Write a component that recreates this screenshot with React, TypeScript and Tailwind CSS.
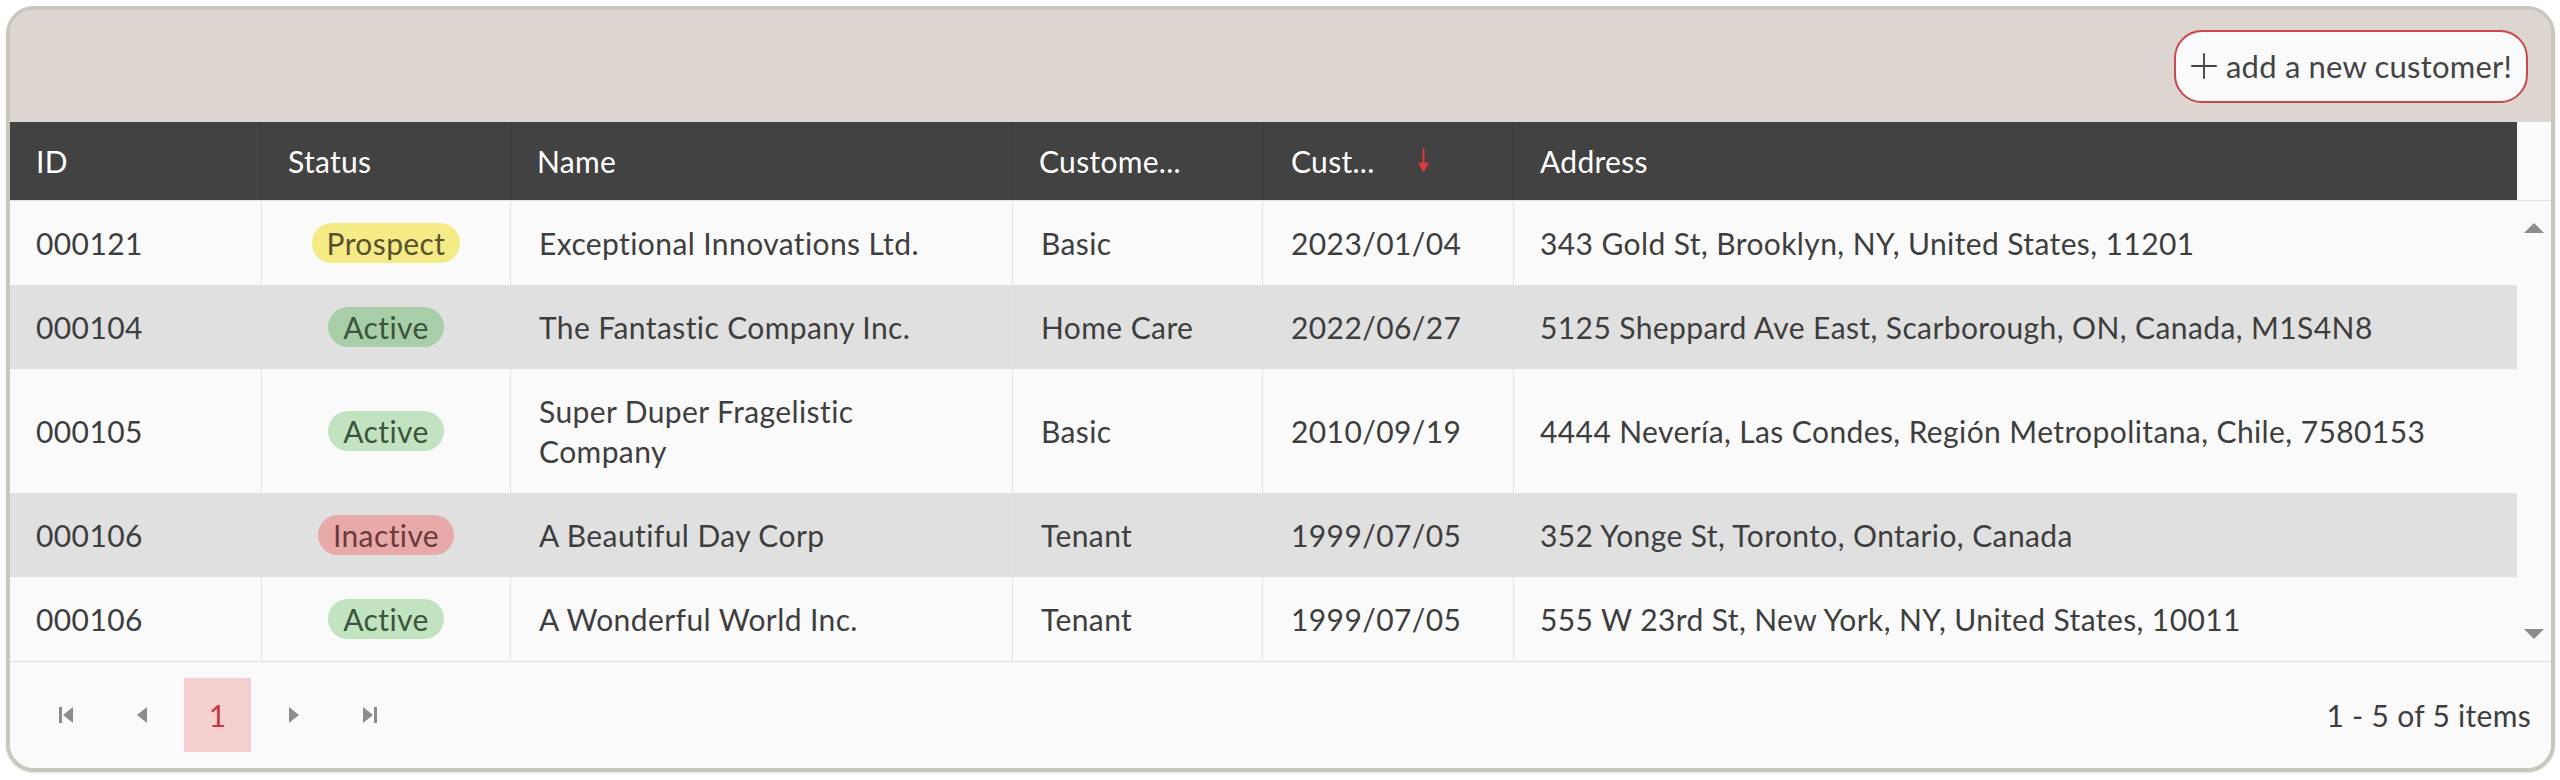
import React from "react";

type Status = "Prospect" | "Active" | "Inactive";

type Row = {
  id: string;
  status: Status;
  name: string;
  type: string;
  since: string;
  address: string;
};

const rows: Row[] = [
  { id: "000121", status: "Prospect", name: "Exceptional Innovations Ltd.", type: "Basic", since: "2023/01/04", address: "343 Gold St, Brooklyn, NY, United States, 11201" },
  { id: "000104", status: "Active", name: "The Fantastic Company Inc.", type: "Home Care", since: "2022/06/27", address: "5125 Sheppard Ave East, Scarborough, ON, Canada, M1S4N8" },
  { id: "000105", status: "Active", name: "Super Duper Fragelistic Company", type: "Basic", since: "2010/09/19", address: "4444 Nevería, Las Condes, Región Metropolitana, Chile, 7580153" },
  { id: "000106", status: "Inactive", name: "A Beautiful Day Corp", type: "Tenant", since: "1999/07/05", address: "352 Yonge St, Toronto, Ontario, Canada" },
  { id: "000106", status: "Active", name: "A Wonderful World Inc.", type: "Tenant", since: "1999/07/05", address: "555 W 23rd St, New York, NY, United States, 10011" },
];

const cols = "grid grid-cols-[252px_249px_502px_250px_251px_1fr]";

const pill = (status: Status, alt: boolean) => {
  if (status === "Prospect") return "bg-[#f4eb87] text-[#57522f]";
  if (status === "Inactive") return "bg-[#e8aaa9] text-[#6b3b3b]";
  return alt ? "bg-[#a8cea8] text-[#3b553c]" : "bg-[#c1e3c0] text-[#3b553c]";
};

const Tri = ({ dir }: { dir: "up" | "down" | "left" | "right" }) => {
  const pts = {
    up: "0,10 10,0 20,10",
    down: "0,0 10,10 20,0",
    left: "10,0 10,16 0,8",
    right: "0,0 0,16 10,8",
  }[dir];
  const box = dir === "up" || dir === "down" ? "0 0 20 10" : "0 0 10 16";
  const size = dir === "up" || dir === "down" ? "w-[20px] h-[10px]" : "w-[10px] h-[16px]";
  return (
    <svg viewBox={box} className={size}>
      <polygon points={pts} fill="#8c8c8c" />
    </svg>
  );
};

export default function App() {
  return (
    <div className="w-[2560px] h-[780px] bg-white p-[6px] pr-[5px] text-[#3e3e3e]" style={{ fontFamily: "Lato, 'Noto Sans', sans-serif" }}>
      <div className="flex h-[766px] flex-col overflow-hidden rounded-[28px] border-4 border-[#c9c7bc] bg-[#fafafa] shadow-sm">
        {/* toolbar */}
        <div className="flex h-[112px] shrink-0 items-center justify-end bg-[#ddd5cf] pr-[23px]">
          <button className="flex h-[73px] items-center gap-[8px] rounded-[28px] border-2 border-[#c9484c] bg-[#fafafa] px-[14px] text-[31px] tracking-[0.2px] text-[#444]">
            <svg viewBox="0 0 24 24" className="h-[28px] w-[28px]" fill="none" stroke="#444" strokeWidth="1.6">
              <path d="M12 1v22M1 12h22" />
            </svg>
            add a new customer!
          </button>
        </div>

        {/* header */}
        <div className="flex h-[79px] shrink-0 border-b border-[#e2e2e2]">
          <div className={`${cols} flex-1 bg-[#424242] text-[30px] tracking-[0.3px] text-white`}>
            {["ID", "Status", "Name", "Custome..."].map((h, i) => (
              <div key={i} className="flex items-center border-r border-[#3a3a3a] px-[26px]">
                {h}
              </div>
            ))}
            <div className="flex items-center border-r border-[#3a3a3a] px-[28px]">
              Cust...
              <svg viewBox="0 0 14 28" className="ml-[42px] h-[26px] w-[13px]">
                <path d="M7 0v22" stroke="#e03a3e" strokeWidth="2" />
                <path d="M1 16l6 10 6-10z" fill="#e03a3e" />
              </svg>
            </div>
            <div className="flex items-center px-[26px]">Address</div>
          </div>
          <div className="w-[34px] bg-[#fafafa]" />
        </div>

        {/* body */}
        <div className="flex shrink-0">
          <div className="flex-1 text-[30px] tracking-[0.4px]">
            {rows.map((r, i) => {
              const alt = i % 2 === 1;
              return (
                <div key={i} className={`${cols} leading-[40px] ${alt ? "bg-[#e0e0e0]" : "bg-[#fafafa]"}`}>
                  <div className="flex items-center border-r border-[#e3e3e3] px-[26px] py-[22px]">{r.id}</div>
                  <div className="flex items-center justify-center border-r border-[#e3e3e3] px-[26px] py-[22px]">
                    <span className={`rounded-full px-[15px] leading-[40px] ${pill(r.status, alt)}`}>{r.status}</span>
                  </div>
                  <div className="flex items-center border-r border-[#e3e3e3] px-[28px] py-[22px]">
                    <span className="max-w-[390px]">{r.name}</span>
                  </div>
                  <div className="flex items-center border-r border-[#e3e3e3] px-[28px] py-[22px]">{r.type}</div>
                  <div className="flex items-center border-r border-[#e3e3e3] px-[28px] py-[22px]">{r.since}</div>
                  <div className="flex items-center px-[26px] py-[22px]">{r.address}</div>
                </div>
              );
            })}
          </div>
          <div className="flex w-[34px] flex-col items-center justify-between bg-[#fafafa] py-[22px]">
            <Tri dir="up" />
            <Tri dir="down" />
          </div>
        </div>

        {/* pager */}
        <div className="flex flex-1 items-center justify-between border-t border-[#e0e0e0] bg-[#fafafa] pl-[22px] pr-[20px]">
          <div className="flex items-center gap-[9px]">
            <button className="flex h-[74px] w-[67px] items-center justify-center gap-[1px]">
              <span className="h-[16px] w-[3px] bg-[#8c8c8c]" />
              <Tri dir="left" />
            </button>
            <button className="flex h-[74px] w-[67px] items-center justify-center">
              <Tri dir="left" />
            </button>
            <button className="flex h-[74px] w-[67px] items-center justify-center bg-[#f4d1d0] text-[30px] text-[#c9363b]">1</button>
            <button className="flex h-[74px] w-[67px] items-center justify-center">
              <Tri dir="right" />
            </button>
            <button className="flex h-[74px] w-[67px] items-center justify-center gap-[1px]">
              <Tri dir="right" />
              <span className="h-[16px] w-[3px] bg-[#8c8c8c]" />
            </button>
          </div>
          <div className="text-[30px] tracking-[0.3px]">1 - 5 of 5 items</div>
        </div>
      </div>
    </div>
  );
}
